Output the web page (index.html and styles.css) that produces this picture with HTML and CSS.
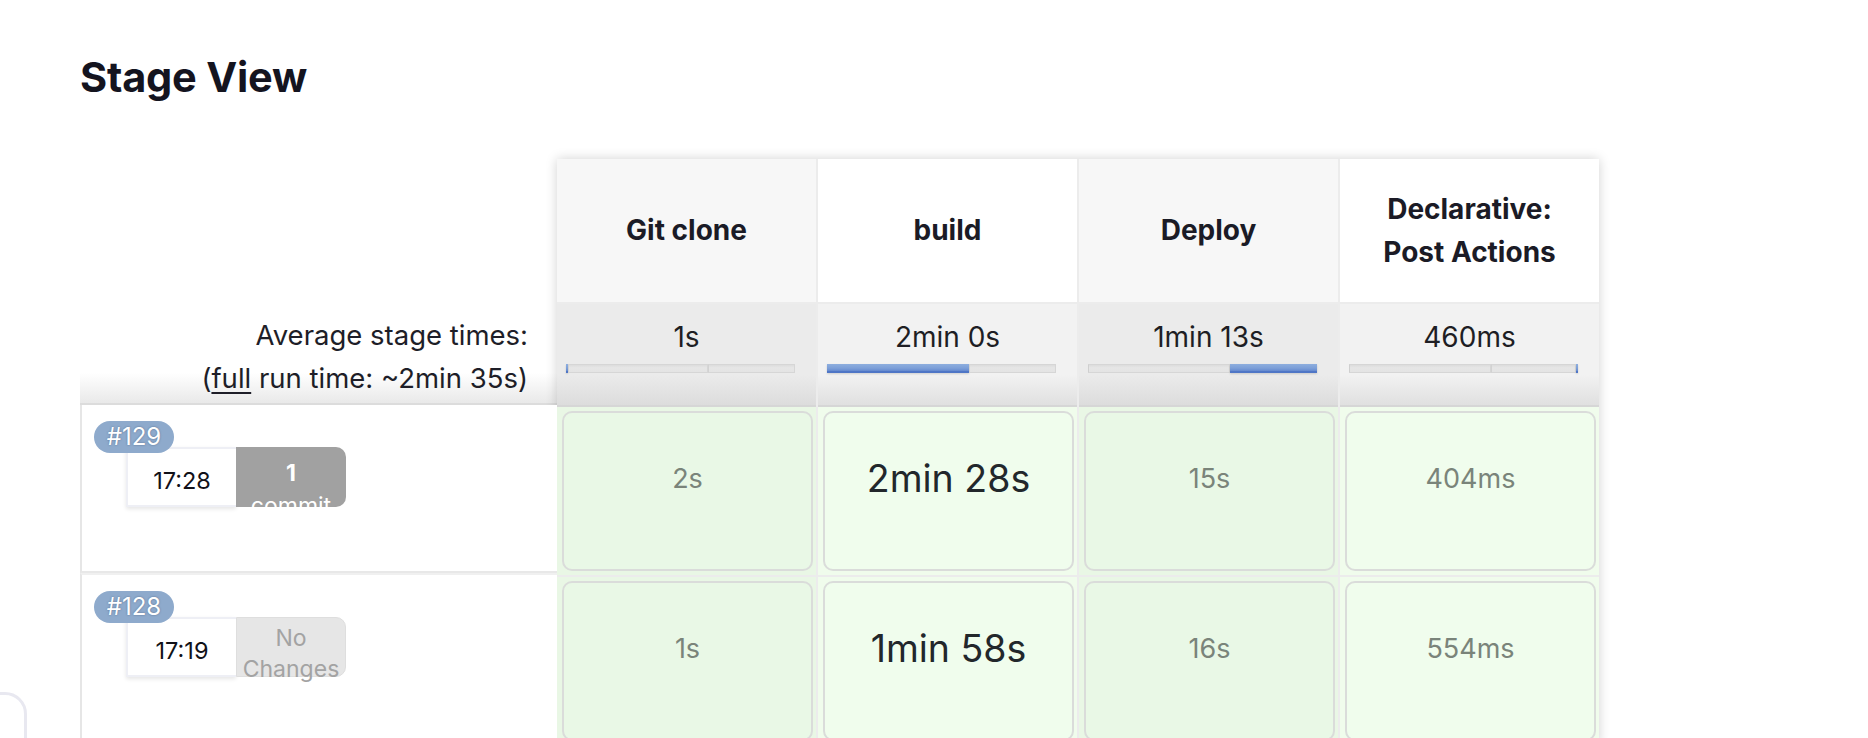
FILE: index.html
```html
<!DOCTYPE html>
<html>
<head>
<meta charset="utf-8">
<title>Stage View</title>
<link rel="stylesheet" href="styles.css">
</head>
<body>
<div class="page">
  <h2 class="title">Stage View</h2>
  <div class="stage-view">
    <div class="job-col">
      <div class="job-head"></div>
      <div class="job-avg">
        <div>Average stage times:</div>
        <div>(<a class="full" href="#">full</a> run time: ~2min 35s)</div>
      </div>
      <div class="job-row">
        <span class="badge">#129</span>
        <div class="run">
          <div class="time">17:28</div>
          <div class="changes commits"><b>1</b><br>commit</div>
        </div>
      </div>
      <div class="job-row">
        <span class="badge">#128</span>
        <div class="run">
          <div class="time">17:19</div>
          <div class="changes none">No<br>Changes</div>
        </div>
      </div>
    </div>

    <div class="stages">
      <div class="head odd"><span>Git clone</span></div>
      <div class="head even"><span>build</span></div>
      <div class="head odd"><span>Deploy</span></div>
      <div class="head even"><span>Declarative:<br>Post Actions</span></div>

      <div class="avg odd">
        <div class="avg-val">1s</div>
        <div class="bar"><i class="seg on" style="width:0.8%"></i><i class="seg" style="width:61.4%"></i><i class="seg" style="width:37.8%"></i></div>
      </div>
      <div class="avg even">
        <div class="avg-val">2min 0s</div>
        <div class="bar"><i class="seg on" style="width:62.2%"></i><i class="seg" style="width:37.8%"></i></div>
      </div>
      <div class="avg odd">
        <div class="avg-val">1min 13s</div>
        <div class="bar"><i class="seg" style="width:62.2%"></i><i class="seg on" style="width:37.8%"></i></div>
      </div>
      <div class="avg even">
        <div class="avg-val">460ms</div>
        <div class="bar"><i class="seg" style="width:62.2%"></i><i class="seg" style="width:37.1%"></i><i class="seg on" style="width:0.7%"></i></div>
      </div>

      <div class="cell odd"><div class="box"><div class="dur">2s</div></div></div>
      <div class="cell even"><div class="box"><div class="dur big">2min 28s</div></div></div>
      <div class="cell odd"><div class="box"><div class="dur">15s</div></div></div>
      <div class="cell even"><div class="box"><div class="dur">404ms</div></div></div>

      <div class="cell odd"><div class="box"><div class="dur">1s</div></div></div>
      <div class="cell even"><div class="box"><div class="dur big">1min 58s</div></div></div>
      <div class="cell odd"><div class="box"><div class="dur">16s</div></div></div>
      <div class="cell even"><div class="box"><div class="dur">554ms</div></div></div>
    </div>
  </div>
</div>
<div class="side-box"></div>
</body>
</html>
```

FILE: styles.css
```css
html, body {
  margin: 0;
  padding: 0;
  background: #ffffff;
  font-family: Inter, "Noto Sans", "Liberation Sans", sans-serif;
  color: #1b1b24;
  overflow: hidden;
}

.page {
  padding: 52px 0 0 80px;
}

.title {
  margin: 0 0 57px 0;
  font-size: 41.5px;
  line-height: 50px;
  font-weight: 700;
  color: #14141f;
  letter-spacing: -0.2px;
}

.stage-view {
  display: flex;
  align-items: flex-start;
}

/* left job column */
.job-col {
  width: 477px;
  flex: none;
  display: flex;
  flex-direction: column;
}

.job-head {
  height: 143px;
}

.job-avg {
  height: 103px;
  box-sizing: border-box;
  padding: 12px 29px 0 0;
  text-align: right;
  font-size: 27.5px;
  line-height: 43px;
  color: #1e1e28;
  background: linear-gradient(to bottom, #ffffff 0%, #ffffff 70%, #e9e9e9 100%);
  border-bottom: 2px solid #dcdcdc;
}

.full {
  color: #1e1e28;
  text-decoration: underline;
  text-underline-offset: 4px;
}

.job-row {
  position: relative;
  height: 168px;
  box-sizing: border-box;
  border-left: 2px solid #e6e6e6;
  border-bottom: 2px solid #e8e8e8;
  padding: 42px 0 0 44px;
  background: #fff;
}

.job-row + .job-row {
  border-top: 2px solid #f0f0f0;
}

.badge {
  position: absolute;
  left: 12px;
  top: 16px;
  width: 80px;
  height: 32px;
  line-height: 32px;
  border-radius: 16px;
  background: #8eaacc;
  color: #ffffff;
  font-size: 24px;
  text-align: center;
  text-shadow: 0 0 2px rgba(40, 60, 90, 0.55);
  z-index: 2;
}

.run {
  display: flex;
}

.time {
  width: 110px;
  height: 60px;
  box-sizing: border-box;
  overflow: hidden;
  background: #ffffff;
  border: 2px solid #eeeff5;
  border-right: none;
  box-shadow: 0 2px 4px rgba(0, 0, 0, 0.10);
  font-size: 23.5px;
  padding-top: 4px;
  line-height: 56px;
  text-align: center;
  color: #111118;
}

.changes {
  width: 110px;
  height: 60px;
  box-sizing: border-box;
  border-radius: 0 10px 10px 0;
  text-align: center;
  font-size: 23px;
}

.changes.commits {
  overflow: hidden;
  background: #a1a1a1;
  color: #ffffff;
  line-height: 33px;
  padding-top: 10px;
}

.changes.commits b {
  font-weight: 700;
}

.changes.none {
  overflow: visible;
  background: #e6e6e6;
  color: #a3a3a3;
  border: 1px solid #dedede;
  line-height: 31px;
  padding-top: 5px;
}

/* stage table */
.stages {
  display: grid;
  grid-template-columns: repeat(4, 259px);
  grid-template-rows: 143px 101px 168px 168px;
  column-gap: 2px;
  row-gap: 2px;
  background: #ececec;
  box-shadow: 0 0 11px rgba(0, 0, 0, 0.18);
}

.head {
  display: flex;
  align-items: center;
  justify-content: center;
  text-align: center;
  font-weight: 700;
  font-size: 28px;
  line-height: 43px;
  color: #1b1b26;
}

.head.odd { background: #f7f7f7; }
.head.even { background: #ffffff; }

.avg {
  box-sizing: border-box;
  padding-top: 12px;
  text-align: center;
  font-size: 28px;
  line-height: 43px;
  color: #1e1e24;
  border-bottom: 2px solid #d6d6d6;
  height: 103px;
}

.avg.odd { background: linear-gradient(to bottom, #ebebeb 0%, #ebebeb 70%, #dcdcdc 100%); }
.avg.even { background: linear-gradient(to bottom, #f2f2f2 0%, #f2f2f2 70%, #e0e0e0 100%); }

.bar {
  display: flex;
  height: 9px;
  width: 229px;
  margin: 5px 0 0 9px;
}

.seg {
  display: block;
  height: 100%;
  box-sizing: border-box;
  background: linear-gradient(to bottom, #dcdcdc 0%, #e6e6e6 40%, #e4e4e4 100%);
  border: 1px solid #d6d6d6;
  border-left-color: #cfcfcf;
}

.seg + .seg {
  border-left: 1px solid #d2d2d2;
}

.seg.on {
  background: linear-gradient(to bottom, #8eaede 0%, #7c9fd8 60%, #6489cf 100%);
  border: none;
  border-bottom: 2px solid #4f76c6;
  box-shadow: 0 1px 2px rgba(0, 0, 0, 0.15);
}

.cell {
  padding: 4px 3px 4px 5px;
  box-sizing: border-box;
}

.cell.odd { background: #e9f7e5; }
.cell.even { background: #f0fcec; }

.box {
  height: 160px;
  box-sizing: border-box;
  border: 2px solid #dadcda;
  border-radius: 10px;
}

.cell.odd .box { background: #e9f8e6; }
.cell.even .box { background: #f0fded; }

.dur {
  height: 130px;
  display: flex;
  align-items: center;
  justify-content: center;
  font-size: 27px;
  color: #7a847a;
}

.dur.big {
  font-size: 37.5px;
  color: #22272b;
}

.side-box {
  position: absolute;
  left: -60px;
  top: 692px;
  width: 87px;
  height: 120px;
  box-sizing: border-box;
  border: 3px solid #e8e8f0;
  border-radius: 22px;
  background: #ffffff;
}
```
